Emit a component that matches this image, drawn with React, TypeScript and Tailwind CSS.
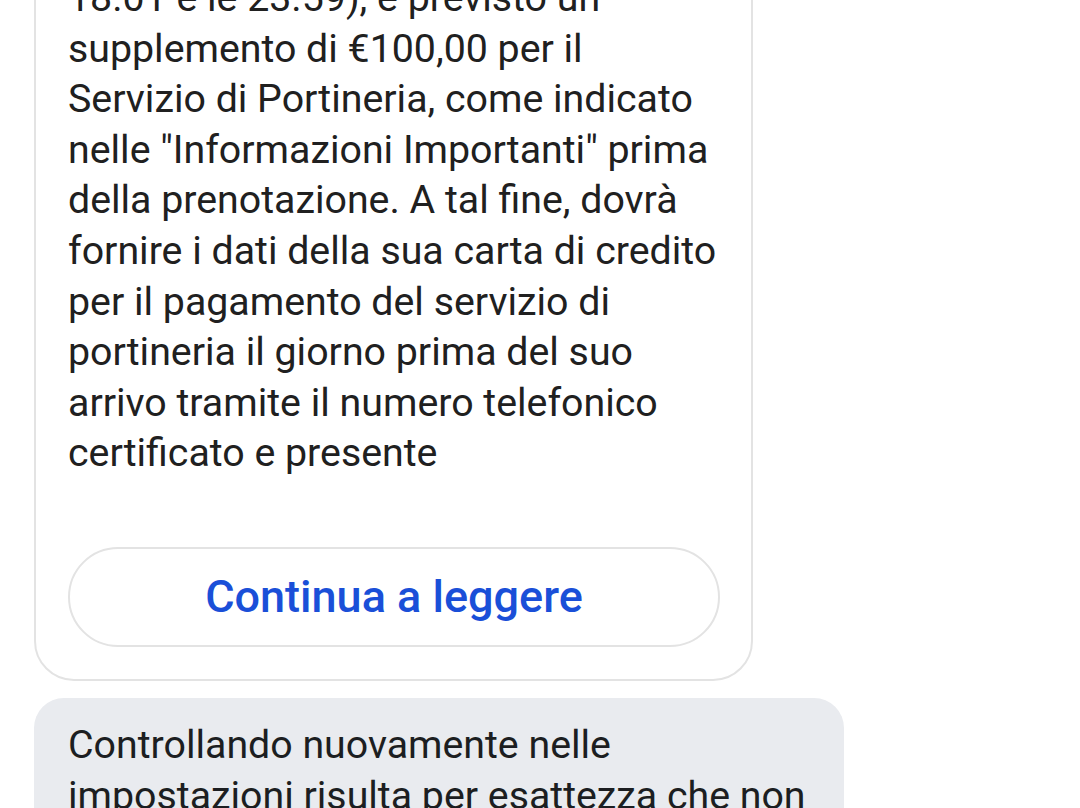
const cardLines = [
  "18.01 e le 23.59), è previsto un",
  "supplemento di €100,00 per il",
  "Servizio di Portineria, come indicato",
  'nelle "Informazioni Importanti" prima',
  "della prenotazione. A tal fine, dovrà",
  "fornire i dati della sua carta di credito",
  "per il pagamento del servizio di",
  "portineria il giorno prima del suo",
  "arrivo tramite il numero telefonico",
  "certificato e presente",
];

const replyLines = [
  "Controllando nuovamente nelle",
  "impostazioni risulta per esattezza che non",
  "è stato possibile",
];

const App = () => (
  <div
    className="w-[1080px] h-[808px] overflow-hidden bg-white"
    style={{ fontFamily: "Roboto, 'Noto Sans', sans-serif" }}
  >
    <div className="flex flex-col items-start pl-[34px] mt-[-60px] gap-[17px]">
      {/* Card bubble */}
      <div className="w-[719px] rounded-[40px] border-2 border-[#e3e3e3] bg-white pl-[32px] pr-[24px] pt-[31px] pb-[32px]">
        <p className="text-[39.3px] leading-[50.6px] text-[#202020]">
          {cardLines.map((l) => (
            <span key={l} className="block whitespace-nowrap">
              {l}
            </span>
          ))}
        </p>
        <button className="mt-[68px] w-[652px] h-[100px] rounded-full border-2 border-[#e3e3e3] bg-white text-[45px] font-medium text-[#1a4fd8]">
          Continua a leggere
        </button>
      </div>

      {/* Grey bubble */}
      <div className="w-[810px] rounded-[30px] bg-[#e9ebef] pl-[34px] pr-[30px] pt-[22px] pb-[20px]">
        <p className="text-[39.3px] leading-[50.6px] text-[#1c1e21]">
          {replyLines.map((l) => (
            <span key={l} className="block whitespace-nowrap">
              {l}
            </span>
          ))}
        </p>
      </div>
    </div>
  </div>
);

export default App;
